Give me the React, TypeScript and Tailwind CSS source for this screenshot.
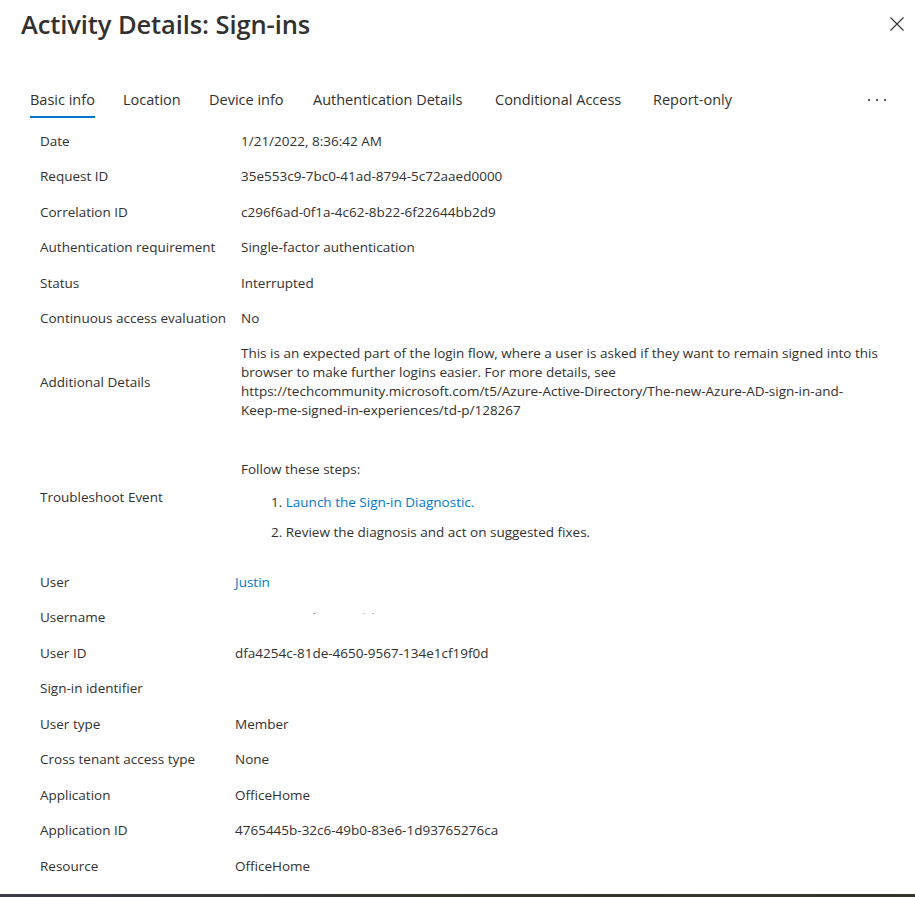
const font = { fontFamily: "'Open Sans', 'Noto Sans', sans-serif" };

const topRows = [
  ["Date", "1/21/2022, 8:36:42 AM"],
  ["Request ID", "35e553c9-7bc0-41ad-8794-5c72aaed0000"],
  ["Correlation ID", "c296f6ad-0f1a-4c62-8b22-6f22644bb2d9"],
  ["Authentication requirement", "Single-factor authentication"],
  ["Status", "Interrupted"],
  ["Continuous access evaluation", "No"],
];

const userRows = [
  ["User ID", "dfa4254c-81de-4650-9567-134e1cf19f0d"],
  ["Sign-in identifier", ""],
  ["User type", "Member"],
  ["Cross tenant access type", "None"],
  ["Application", "OfficeHome"],
  ["Application ID", "4765445b-32c6-49b0-83e6-1d93765276ca"],
  ["Resource", "OfficeHome"],
];

const tabs = [
  { label: "Basic info", w: "w-[93px]", active: true },
  { label: "Location", w: "w-[86px]" },
  { label: "Device info", w: "w-[104px]" },
  { label: "Authentication Details", w: "w-[182px]" },
  { label: "Conditional Access", w: "w-[158px]" },
  { label: "Report-only", w: "w-[100px]" },
];

function Row({ label, children, wide }: { label: string; children: React.ReactNode; wide?: boolean }) {
  return (
    <div className="flex items-center h-[35.5px] pl-[40px]">
      <div className={`${wide ? "w-[201px]" : "w-[195px]"} shrink-0 whitespace-nowrap`}>{label}</div>
      <div className="whitespace-nowrap">{children}</div>
    </div>
  );
}

const App = () => {
  return (
    <div
      className="w-[915px] h-[897px] bg-white text-[#323130] text-[13.5px] leading-[19px] flex flex-col overflow-hidden"
      style={font}
    >
      <div className="h-[48px] flex items-center justify-between pl-[21px] pr-[9px]">
        <h1 className="text-[25.5px] leading-[32px] font-semibold tracking-[-0.1px]">
          Activity Details: Sign-ins
        </h1>
        <button className="w-[14px] h-[14px] mr-[2px] flex items-center justify-center text-[#323130]">
          <svg width="14" height="14" viewBox="0 0 14 14" fill="none" stroke="currentColor" strokeWidth="1.1">
            <path d="M0.5 0.5 L13.5 13.5 M13.5 0.5 L0.5 13.5" />
          </svg>
        </button>
      </div>

      <div className="flex items-start pl-[30px] pr-[29px] mt-[42px] mb-[5.25px]">
        {tabs.map((t) => (
          <div key={t.label} className={`${t.w} shrink-0`}>
            <span
              className={`inline-block text-[14.5px] leading-[20px] whitespace-nowrap pb-[6px] border-b-2 ${
                t.active ? "border-[#0078d4] text-[#323130]" : "border-transparent"
              }`}
            >
              {t.label}
            </span>
          </div>
        ))}
        <div className="ml-auto h-[20px] flex items-center gap-[6px]">
          <span className="w-[2px] h-[2px] bg-[#605e5c]" />
          <span className="w-[2px] h-[2px] bg-[#605e5c]" />
          <span className="w-[2px] h-[2px] bg-[#605e5c]" />
        </div>
      </div>

      {topRows.map(([l, v]) => (
        <Row key={l} label={l} wide>
          {v}
        </Row>
      ))}

      <div className="flex items-center pl-[40px] pt-[8px] pb-[9.5px]">
        <div className="w-[201px] shrink-0">Additional Details</div>
        <div className="whitespace-nowrap">
          <div>This is an expected part of the login flow, where a user is asked if they want to remain signed into this</div>
          <div>browser to make further logins easier. For more details, see</div>
          <div>https://techcommunity.microsoft.com/t5/Azure-Active-Directory/The-new-Azure-AD-sign-in-and-</div>
          <div>Keep-me-signed-in-experiences/td-p/128267</div>
        </div>
      </div>

      <div className="flex h-[134.5px] pl-[40px]">
        <div className="w-[201px] shrink-0 self-center">Troubleshoot Event</div>
        <div className="pt-[30px]">
          <div>Follow these steps:</div>
          <div className="pl-[30px] mt-[14px]">
            1. <a className="text-[#0078d4]">Launch the Sign-in Diagnostic.</a>
          </div>
          <div className="pl-[30px] mt-[11px]">2. Review the diagnosis and act on suggested fixes.</div>
        </div>
      </div>

      <Row label="User">
        <a className="text-[#0078d4]">Justin</a>
      </Row>
      <div className="flex h-[35.5px] pl-[40px]">
        <div className="w-[195px] shrink-0 self-center">Username</div>
        <div className="flex items-start pt-[13px]">
          <span className="ml-[78px] w-[3px] h-[1px] bg-[#b8b8b8]" />
          <span className="ml-[47px] w-[2px] h-[1px] bg-[#c8c8c8]" />
          <span className="ml-[7px] w-[2px] h-[1px] bg-[#b8b8b8]" />
        </div>
      </div>
      {userRows.map(([l, v]) => (
        <Row key={l} label={l}>
          {v}
        </Row>
      ))}

      <div className="flex-1" />
      <div className="h-[3px] bg-gradient-to-r from-[#3b3b47] via-[#35362c] to-[#33372a]" />
    </div>
  );
};

export default App;
